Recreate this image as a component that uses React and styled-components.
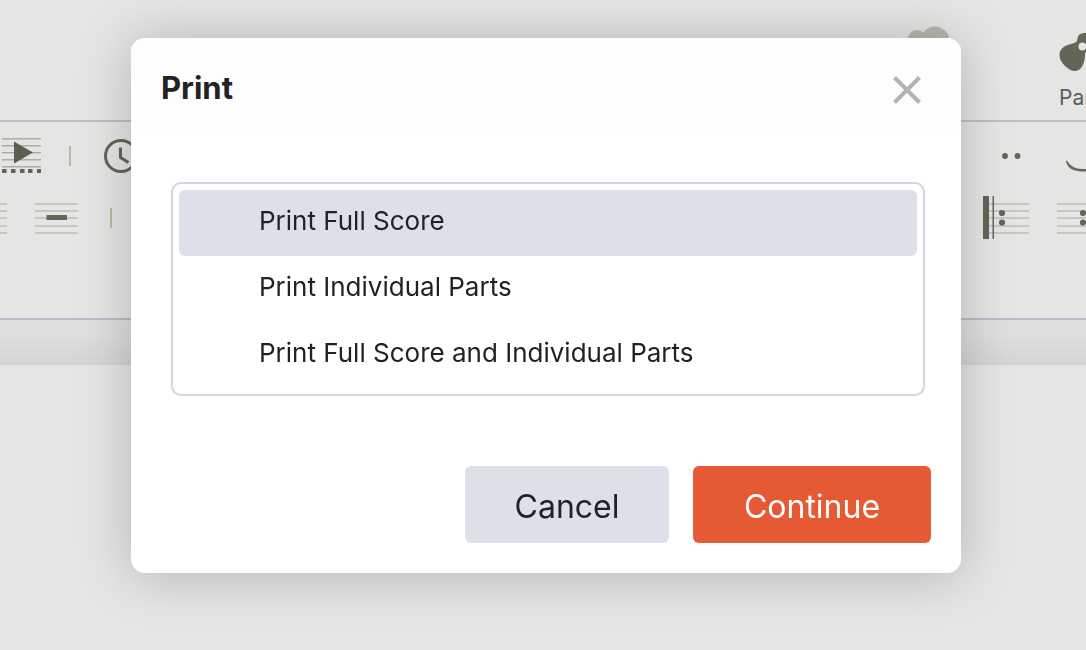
import React, { useState } from "react";
import styled, { createGlobalStyle } from "styled-components";

const ink = "#636556";
const line = "#c6c7c2";

const GlobalStyle = createGlobalStyle`
  *, *::before, *::after { box-sizing: border-box; }
  body { margin: 0; background: #e5e5e3; font-family: Inter, sans-serif; color: #222; }
  button { font: inherit; color: inherit; border: 0; padding: 0; background: none; cursor: pointer; }
`;

const Page = styled.div`
  min-height: 100vh;
  overflow: hidden;
`;

const Header = styled.header`
  display: flex;
  justify-content: flex-end;
  align-items: flex-start;
  height: 120px;
  padding-top: 24px;
`;

const HeaderTool = styled.button`
  display: flex;
  flex-direction: column;
  align-items: flex-start;
  gap: 10px;
  width: ${(p) => p.$width}px;
  color: #5c5a66;
  font-size: 21px;
  line-height: 28px;
  svg { flex: none; }
`;

const Toolbar = styled.section`
  display: flex;
  flex-direction: column;
  gap: 12px;
  height: 200px;
  padding-top: 9px;
  border-top: 2px solid #bcbfca;
  border-bottom: 2px solid #bcbcc8;
`;

const ToolRow = styled.div`
  display: flex;
  justify-content: space-between;
  height: 50px;
`;

const ToolGroup = styled.div`
  display: flex;
  align-items: center;
  gap: 28px;
`;

const Tool = styled.button`
  display: flex;
  justify-content: ${(p) => (p.$end ? "flex-end" : "flex-start")};
  flex: none;
  width: ${(p) => p.$width}px;
  svg { flex: none; }
`;

const Separator = styled.span`
  width: 2px;
  height: 20px;
  background: #b8b9a2;
`;

const Band = styled.div`
  height: 45px;
  background: linear-gradient(#dde0df, #dcdfde 35%, #d2d5d3);
`;

const Overlay = styled.div`
  position: fixed;
  inset: 0;
  display: flex;
  justify-content: center;
  align-items: flex-start;
  padding: 38px 20px 20px 26px;
`;

const Dialog = styled.div`
  width: 100%;
  max-width: 830px;
  border-radius: 14px;
  background: #fff;
  box-shadow: 0 2px 52px rgba(0, 0, 0, 0.22);
`;

const DialogHeader = styled.div`
  display: flex;
  justify-content: space-between;
  align-items: center;
  height: 98px;
  padding: 2px 40px 0 30px;
  border-radius: 14px 14px 0 0;
  background: #fdfdfd;
`;

const Title = styled.h1`
  margin: 0;
  font-size: 31px;
  line-height: 40px;
  font-weight: 700;
`;

const CloseButton = styled.button`
  display: flex;
  padding-top: 4px;
`;

const Options = styled.div`
  margin: 46px 36px 0 40px;
  padding: 6px;
  border: 2px solid #d3d5e1;
  border-radius: 10px;
`;

const Option = styled.button`
  display: block;
  width: 100%;
  height: 66px;
  padding: 0 20px 4px 80px;
  border-radius: 6px;
  background: ${(p) => (p.$selected ? "#dee0e9" : "transparent")};
  text-align: left;
  font-size: 26px;
  line-height: 32px;
`;

const Actions = styled.div`
  display: flex;
  justify-content: flex-end;
  gap: 24px;
  padding: 70px 30px 30px;
`;

const ActionButton = styled.button`
  min-width: ${(p) => (p.$primary ? 238 : 204)}px;
  height: 77px;
  padding: 4px 40px 0;
  border-radius: 6px;
  background: ${(p) => (p.$primary ? "#e55934" : "#dee0e9")};
  color: ${(p) => (p.$primary ? "#fff" : "#222")};
  font-size: 32px;
  line-height: 40px;
`;

const Staff = ({ x = 0, width }) =>
  [3, 10, 17, 25, 32].map((y) => (
    <rect key={y} x={x} y={y} width={width} height="2" fill={line} />
  ));

const PlayIcon = () => (
  <svg width="39" height="40" viewBox="0 0 39 40" aria-hidden="true">
    {[2, 9, 16, 23, 30].map((y) => (
      <rect key={y} y={y} width="39" height="1.5" fill="#acada3" />
    ))}
    <path d="M12 5.5v22L31 16.5z" fill="#5c5e51" />
    {[0, 9, 18, 26, 35].map((x) => (
      <rect key={x} x={x} y="33" width="4.5" height="4" fill={ink} />
    ))}
  </svg>
);

const ClockIcon = () => (
  <svg width="34" height="34" viewBox="0 0 34 34" fill="none" stroke={ink} strokeWidth="3" aria-hidden="true">
    <circle cx="17" cy="17" r="15.5" />
    <path d="M16.5 8.5V18.5l8 5" />
  </svg>
);

const RestIcon = () => (
  <svg width="44" height="36" viewBox="0 0 44 36" aria-hidden="true">
    <Staff width={43} />
    <rect x="11.5" y="15" width="20.5" height="5" fill={ink} />
  </svg>
);

const DotsIcon = () => (
  <svg width="20" height="8" viewBox="0 0 20 8" fill={ink} aria-hidden="true">
    <circle cx="3" cy="4" r="2.9" />
    <circle cx="15.5" cy="4" r="2.9" />
  </svg>
);

const SlurIcon = () => (
  <svg width="40" height="34" viewBox="0 0 40 34" fill={ink} aria-hidden="true">
    <path d="M0 22C1 29 8 32.5 16 32.5S31 29 32 22L31 21.5C28 27 23 30 16 30S4 27 1 21.500z" />
  </svg>
);

const RepeatStartIcon = () => (
  <svg width="46" height="44" viewBox="0 0 46 44" fill={ink} aria-hidden="true">
    <g transform="translate(0 4)"><Staff x={6} width={40} /></g>
    <rect width="6" height="43" />
    <rect x="9.5" width="1.5" height="43" />
    <circle cx="19" cy="17" r="3.100" />
    <circle cx="19" cy="26.5" r="3.100" />
  </svg>
);

const RepeatEndIcon = () => (
  <svg width="46" height="44" viewBox="0 0 46 44" fill={ink} aria-hidden="true">
    <g transform="translate(0 4)"><Staff width={40} /></g>
    <circle cx="26" cy="17" r="3.1" />
    <circle cx="26" cy="26.5" r="3.1" />
  </svg>
);

const CloudIcon = () => (
  <svg width="52" height="44" viewBox="0 0 52 44" fill="#b6b7b0" aria-hidden="true">
    <circle cx="9" cy="15" r="9" />
    <circle cx="27" cy="17" r="14.5" />
    <rect x="2" y="16" width="46" height="20" rx="10" />
  </svg>
);

const PartsIcon = () => (
  <svg width="48" height="50" viewBox="0 0 48 50" aria-hidden="true">
    <path d="M18.5 15C18.5 11 22 9 26 9C32 9 36 14 36 20C36 25 27 24 26 30C26 38 23 47 16 47C10 47 .5 39 .5 31C.5 24 7 21 12 20C16 19 18 18 18.5 15z" fill={ink} />
    <circle cx="23.5" cy="22.5" r="4" fill="#e5e5e3" />
  </svg>
);

const choices = ["Print Full Score", "Print Individual Parts", "Print Full Score and Individual Parts"];

export default function App() {
  const [selected, setSelected] = useState(0);
  return (
    <>
      <GlobalStyle />
      <Page>
        <Header>
          <HeaderTool $width={151} aria-label="Cloud"><CloudIcon /></HeaderTool>
          <HeaderTool $width={27}><PartsIcon />Parts</HeaderTool>
        </Header>
        <Toolbar>
          <ToolRow>
            <ToolGroup>
              <Tool $width={41} $end aria-label="Playback"><PlayIcon /></Tool>
              <Separator />
              <Tool $width={39} $end aria-label="Tempo"><ClockIcon /></Tool>
            </ToolGroup>
            <ToolGroup>
              <Tool $width={36} aria-label="Dots"><DotsIcon /></Tool>
              <Tool $width={20} aria-label="Slur"><SlurIcon /></Tool>
            </ToolGroup>
          </ToolRow>
          <ToolRow>
            <ToolGroup>
              <Tool $width={7} aria-label="Staff">
                <svg width="7" height="36" viewBox="0 0 7 36" aria-hidden="true"><Staff width={7} /></svg>
              </Tool>
              <Tool $width={47} aria-label="Rest"><RestIcon /></Tool>
              <Separator />
            </ToolGroup>
            <ToolGroup>
              <Tool $width={46} aria-label="Start repeat"><RepeatStartIcon /></Tool>
              <Tool $width={29} aria-label="End repeat"><RepeatEndIcon /></Tool>
            </ToolGroup>
          </ToolRow>
        </Toolbar>
        <Band />
      </Page>
      <Overlay>
        <Dialog role="dialog" aria-modal="true" aria-labelledby="print-title">
          <DialogHeader>
            <Title id="print-title">Print</Title>
            <CloseButton aria-label="Close">
              <svg width="28" height="28" viewBox="0 0 28 28" fill="none" stroke="#b3b3b3" strokeWidth="4" aria-hidden="true">
                <path d="M1.5 1.5l25 25M26.5 1.5l-25 25" />
              </svg>
            </CloseButton>
          </DialogHeader>
          <Options role="listbox" aria-label="Print options">
            {choices.map((choice, i) => (
              <Option key={choice} role="option" aria-selected={i === selected} $selected={i === selected} onClick={() => setSelected(i)}>
                {choice}
              </Option>
            ))}
          </Options>
          <Actions>
            <ActionButton>Cancel</ActionButton>
            <ActionButton $primary>Continue</ActionButton>
          </Actions>
        </Dialog>
      </Overlay>
    </>
  );
}
